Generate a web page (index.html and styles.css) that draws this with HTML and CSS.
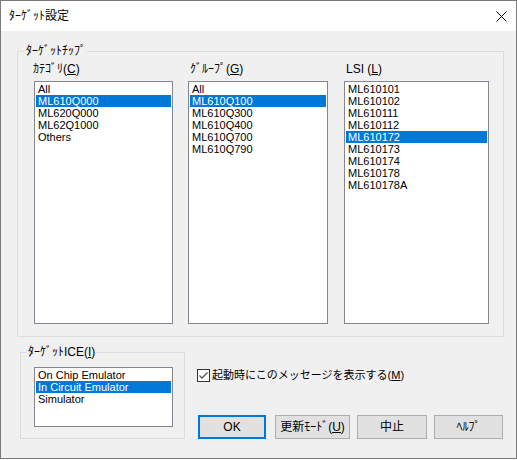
FILE: index.html
```html
<!DOCTYPE html>
<html lang="ja">
<head>
<meta charset="utf-8">
<title>ﾀｰｹﾞｯﾄ設定</title>
<link rel="stylesheet" href="styles.css">
</head>
<body>
<div class="window">
  <div class="titlebar">
    <span class="title">ﾀｰｹﾞｯﾄ設定</span>
    <svg class="close" width="11" height="11" viewBox="0 0 11 11"><path d="M0.5 0.5 L10.5 10.5 M10.5 0.5 L0.5 10.5" stroke="#000" stroke-width="1" fill="none"/></svg>
  </div>
  <div class="content">
    <fieldset class="group chip">
      <legend>ﾀｰｹﾞｯﾄﾁｯﾌﾟ</legend>
      <div class="cols">
        <div class="col c1">
          <div class="lbl">ｶﾃｺﾞﾘ(<u>C</u>)</div>
          <ul class="list">
            <li>All</li>
            <li class="sel">ML610Q000</li>
            <li>ML620Q000</li>
            <li>ML62Q1000</li>
            <li>Others</li>
          </ul>
        </div>
        <div class="col c2">
          <div class="lbl">ｸﾞﾙｰﾌﾟ(<u>G</u>)</div>
          <ul class="list">
            <li>All</li>
            <li class="sel">ML610Q100</li>
            <li>ML610Q300</li>
            <li>ML610Q400</li>
            <li>ML610Q700</li>
            <li>ML610Q790</li>
          </ul>
        </div>
        <div class="col c3">
          <div class="lbl">LSI (<u>L</u>)</div>
          <ul class="list">
            <li>ML610101</li>
            <li>ML610102</li>
            <li>ML610111</li>
            <li>ML610112</li>
            <li class="sel">ML610172</li>
            <li>ML610173</li>
            <li>ML610174</li>
            <li>ML610178</li>
            <li>ML610178A</li>
          </ul>
        </div>
      </div>
    </fieldset>
    <div class="lower">
      <fieldset class="group ice">
        <legend>ﾀｰｹﾞｯﾄICE(<u>I</u>)</legend>
        <div class="ice-inner">
          <ul class="list ice-list">
            <li>On Chip Emulator</li>
            <li class="sel">In Circuit Emulator</li>
            <li>Simulator</li>
          </ul>
        </div>
      </fieldset>
      <div class="right">
        <label class="chk">
          <svg class="box" width="13" height="13" viewBox="0 0 13 13"><rect x="0.5" y="0.5" width="12" height="12" fill="#fff" stroke="#333"/><path d="M2.5 6.5 L5 9 L10.5 3.5" stroke="#555" stroke-width="1.3" fill="none"/></svg>
          <span class="chk-text">起動時にこのメッセージを表示する(<u>M</u>)</span>
        </label>
        <div class="buttons">
          <button class="btn ok">OK</button>
          <button class="btn upd">更新ﾓｰﾄﾞ(<u>U</u>)</button>
          <button class="btn cancel">中止</button>
          <button class="btn help">ﾍﾙﾌﾟ</button>
        </div>
      </div>
    </div>
  </div>
</div>
</body>
</html>
```

FILE: styles.css
```css
html, body {
  margin: 0;
  padding: 0;
  background: #ffffff;
}
body {
  font-family: "Liberation Sans", "Noto Sans CJK JP", sans-serif;
  font-size: 12px;
  color: #000;
}
.window {
  width: 517px;
  height: 459px;
  box-sizing: border-box;
  border: 1px solid #7a7a7a;
  background: #f0f0f0;
  display: flex;
  flex-direction: column;
}
.titlebar {
  height: 30px;
  flex: none;
  background: #fff;
  display: flex;
  align-items: center;
  justify-content: space-between;
  padding: 0 9px 0 8px;
}
.title {
  font-size: 12px;
  line-height: 14px;
}
.close {
  display: block;
}
.content {
  padding: 13px 0 0 16px;
}
.group {
  margin: 0;
  padding: 0;
  border: 1px solid #dcdcdc;
  min-width: 0;
  box-sizing: border-box;
}
.group legend {
  padding: 0 1px;
  line-height: 14px;
  font-size: 12px;
}
.chip {
  width: 487px;
}
.chip legend {
  margin-left: 7px;
}
.cols {
  display: flex;
  padding: 4px 14px 12px 16px;
}
.col {
  display: flex;
  flex-direction: column;
}
.c1 { width: 139px; }
.c2 { width: 140px; margin-left: 15px; }
.c3 { width: 145px; margin-left: 16px; }
.lbl {
  line-height: 14px;
  height: 14px;
  margin-bottom: 5px;
  white-space: nowrap;
}
.c1 .lbl { margin-left: -1px; }
.c2 .lbl { margin-left: 2px; }
.c3 .lbl { margin-left: 2px; }
.list {
  list-style: none;
  margin: 0;
  padding: 1px;
  height: 243px;
  box-sizing: border-box;
  background: #fff;
  border: 1px solid #828790;
  font-size: 11px;
}
.list li {
  height: 12px;
  line-height: 12px;
  padding-left: 2px;
  white-space: nowrap;
}
.list li.sel {
  background: #0078d7;
  color: #fff;
}
.lower {
  display: flex;
  margin-top: 8px;
  margin-left: 3px;
}
.ice {
  width: 165px;
}
.ice legend {
  margin-left: 6px;
}
.ice-inner {
  padding: 8px 11px 11px 13px;
}
.ice-list {
  height: 60px;
  width: 139px;
}
.right {
  margin-left: 12px;
  display: flex;
  flex-direction: column;
  padding-top: 24px;
}
.chk {
  display: flex;
  align-items: center;
  height: 13px;
}
.box {
  display: block;
  flex: none;
}
.chk-text {
  font-size: 11px;
  margin-left: 2px;
  line-height: 13px;
  white-space: nowrap;
}
.buttons {
  display: flex;
  margin-top: 33px;
  margin-left: 1px;
}
.btn {
  height: 24px;
  box-sizing: border-box;
  background: #e1e1e1;
  border: 1px solid #adadad;
  font-family: "Liberation Sans", "Noto Sans CJK JP", sans-serif;
  font-size: 12px;
  color: #000;
  padding: 0;
  margin: 0;
  line-height: 14px;
  white-space: nowrap;
}
.ok {
  width: 68px;
  border: 2px solid #0078d7;
}
.upd { width: 75px; margin-left: 9px; }
.cancel { width: 70px; margin-left: 7px; }
.help { width: 69px; margin-left: 7px; }
```
